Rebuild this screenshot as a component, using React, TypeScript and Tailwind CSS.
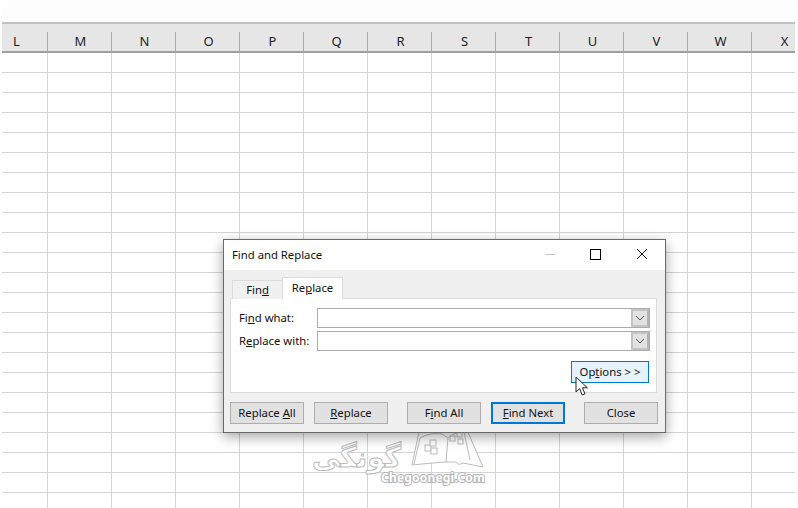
const columns = ["M", "N", "O", "P", "Q", "R", "S", "T", "U", "V", "W"];
const rows = Array.from({ length: 23 }, (_, i) => i);

function Sheet() {
  return (
    <div className="mx-[2px] w-[793px] h-[508px] overflow-hidden">
      <div className="h-[22px] bg-[#fdfdfd] rounded-t-[14px]" />
      <div className="flex h-[31px] items-end bg-[#e6e6e6] border-t-2 border-b-2 border-t-[#c0c0c0] border-b-[#a0a0a0] text-[13px] text-[#222]">
        <div className="w-[46px] h-[19px] flex items-center justify-center pr-[16px] border-r border-[#ababab]">L</div>
        {columns.map((c) => (
          <div key={c} className="w-[64px] h-[19px] flex items-center justify-center pl-[2px] border-r border-[#ababab]">
            {c}
          </div>
        ))}
        <div className="flex-1 h-[19px] flex items-center justify-center pl-[22px]">X</div>
      </div>
      {rows.map((r) => (
        <div key={r} className="flex h-[20px] border-b border-[#d4d4d4] bg-white">
          <div className="w-[46px] border-r border-[#d4d4d4]" />
          {columns.map((c) => (
            <div key={c} className="w-[64px] border-r border-[#d4d4d4]" />
          ))}
        </div>
      ))}
    </div>
  );
}

function DialogButton({ children, border = "border border-[#adadad]", className = "" }: { children: React.ReactNode; border?: string; className?: string }) {
  return (
    <div className={`w-[74px] h-[22px] flex items-center justify-center bg-[#e1e1e1] ${border} ${className}`}>
      {children}
    </div>
  );
}

function Combo() {
  return (
    <div className="flex flex-1 h-[20px] border border-[#ababab] bg-white justify-end">
      <div className="w-[18px] h-full bg-[#e1e1e1] border-2 border-[#c4c4c4] border-r-[#b4b4b4] flex items-center justify-center">
        <svg width="10" height="6" viewBox="0 0 10 6" fill="none" stroke="#555" strokeWidth="1">
          <path d="M1 1l4 4 4-4" />
        </svg>
      </div>
    </div>
  );
}

function Dialog() {
  return (
    <div className="absolute left-[223px] top-[239px] w-[443px] h-[194px] bg-[#f0f0f0] border border-[#6a6a6a] shadow-[0_4px_12px_rgba(0,0,0,0.35)] text-[11.3px] text-[#111] flex flex-col">
      <div className="h-[30px] bg-white flex items-center pl-[8px] pr-[17px]">
        <span className="flex-1">Find and Replace</span>
        <div className="w-[10px] h-px bg-[#c4c4c4] mr-[35px] mb-[2px]" />
        <div className="w-[11px] h-[11px] border border-black mr-[35px] mb-[2px]" />
        <svg className="mb-[2px]" width="12" height="12" viewBox="0 0 12 12" stroke="#111" strokeWidth="1" fill="none">
          <path d="M1 1l10 10M11 1L1 11" />
        </svg>
      </div>
      <div className="flex items-end h-[29px] pl-[8px] relative z-10 mb-[-1px]">
        <div className="w-[50px] h-[19px] flex items-center justify-center bg-[#f0f0f0] border-t border-l border-[#dcdcdc]">
          <span>Fin<u>d</u></span>
        </div>
        <div className="w-[61px] h-[22px] flex items-center justify-center bg-white border border-b-0 border-[#dcdcdc]">
          <span>Re<u>p</u>lace</span>
        </div>
      </div>
      <div className="ml-[6px] mr-[8px] h-[95px] bg-white border border-[#dcdcdc] pl-[8px] pr-[6px] pt-[9px]">
        <div className="flex items-center gap-[9px]">
          <span className="w-[69px] whitespace-nowrap">Fi<u>n</u>d what:</span>
          <Combo />
        </div>
        <div className="flex items-center gap-[9px] mt-[3px]">
          <span className="w-[69px] whitespace-nowrap">R<u>e</u>place with:</span>
          <Combo />
        </div>
        <div className="flex justify-end mt-[10px] pr-[1px]">
          <div className="w-[78px] h-[22px] flex items-center justify-center bg-[#e5f1fb] border border-[#0078d7]">
            <span>Op<u>t</u>ions &gt; &gt;</span>
          </div>
        </div>
      </div>
      <div className="flex mx-[6px] mt-[9px] w-[428px]">
        <DialogButton><span>Replace <u>A</u>ll</span></DialogButton>
        <DialogButton className="ml-[10px]"><span><u>R</u>eplace</span></DialogButton>
        <DialogButton className="ml-[19px]"><span>F<u>i</u>nd All</span></DialogButton>
        <DialogButton className="ml-[10px]" border="border-2 border-[#0078d7]"><span><u>F</u>ind Next</span></DialogButton>
        <DialogButton className="ml-[19px]">Close</DialogButton>
      </div>
      <svg className="absolute left-[351px] top-[136px]" width="14" height="22" viewBox="0 0 14 22">
        <path d="M1 1v15l3.6-3.4 2.6 6.4 2.8-1.2-2.6-6h5z" fill="#fff" stroke="#222" strokeWidth="1" />
      </svg>
    </div>
  );
}

function Watermark() {
  return (
    <div className="absolute left-[312px] top-[424px] w-[176px] h-[64px]">
      <svg className="absolute left-[98px] top-0" width="76" height="46" viewBox="0 0 76 46" fill="#fff" stroke="#bcbcbc" strokeWidth="1">
        <path d="M2 41 L10 3 Q14 0 18 2 L57 6 L73 43 L53 39 Q48 42 46 38 L33 38 Z" />
        <path d="M10 14 Q20 8 32 10 L38 14 Q44 8 54 8 L60 36 M10 14 L4 40 M38 14 L36 38" fill="none" />
        <rect x="15" y="21" width="6" height="6" />
        <rect x="20" y="16" width="6" height="6" />
        <rect x="21" y="24" width="6" height="6" />
        <rect x="40" y="12" width="5" height="5" />
        <rect x="47" y="8" width="5" height="5" />
        <rect x="48" y="15" width="5" height="5" />
      </svg>
      <div dir="rtl" className="absolute left-0 top-[14px] w-[89px] whitespace-nowrap text-[28px] leading-[40px] font-bold text-white [-webkit-text-stroke:1px_#bcbcbc] [font-family:'DejaVu_Sans',sans-serif]">
        گونگی
      </div>
      <div className="absolute left-[69px] top-[46px] text-[12px] leading-[16px] font-bold tracking-[0.2px] text-white [-webkit-text-stroke:2px_#b4b4b4] [paint-order:stroke_fill]">
        Chegoonegi.Com
      </div>
    </div>
  );
}

export default function App() {
  return (
    <div className="relative w-[798px] h-[508px] bg-white overflow-hidden [font-family:'Noto_Sans',sans-serif]">
      <Sheet />
      <Watermark />
      <Dialog />
    </div>
  );
}
